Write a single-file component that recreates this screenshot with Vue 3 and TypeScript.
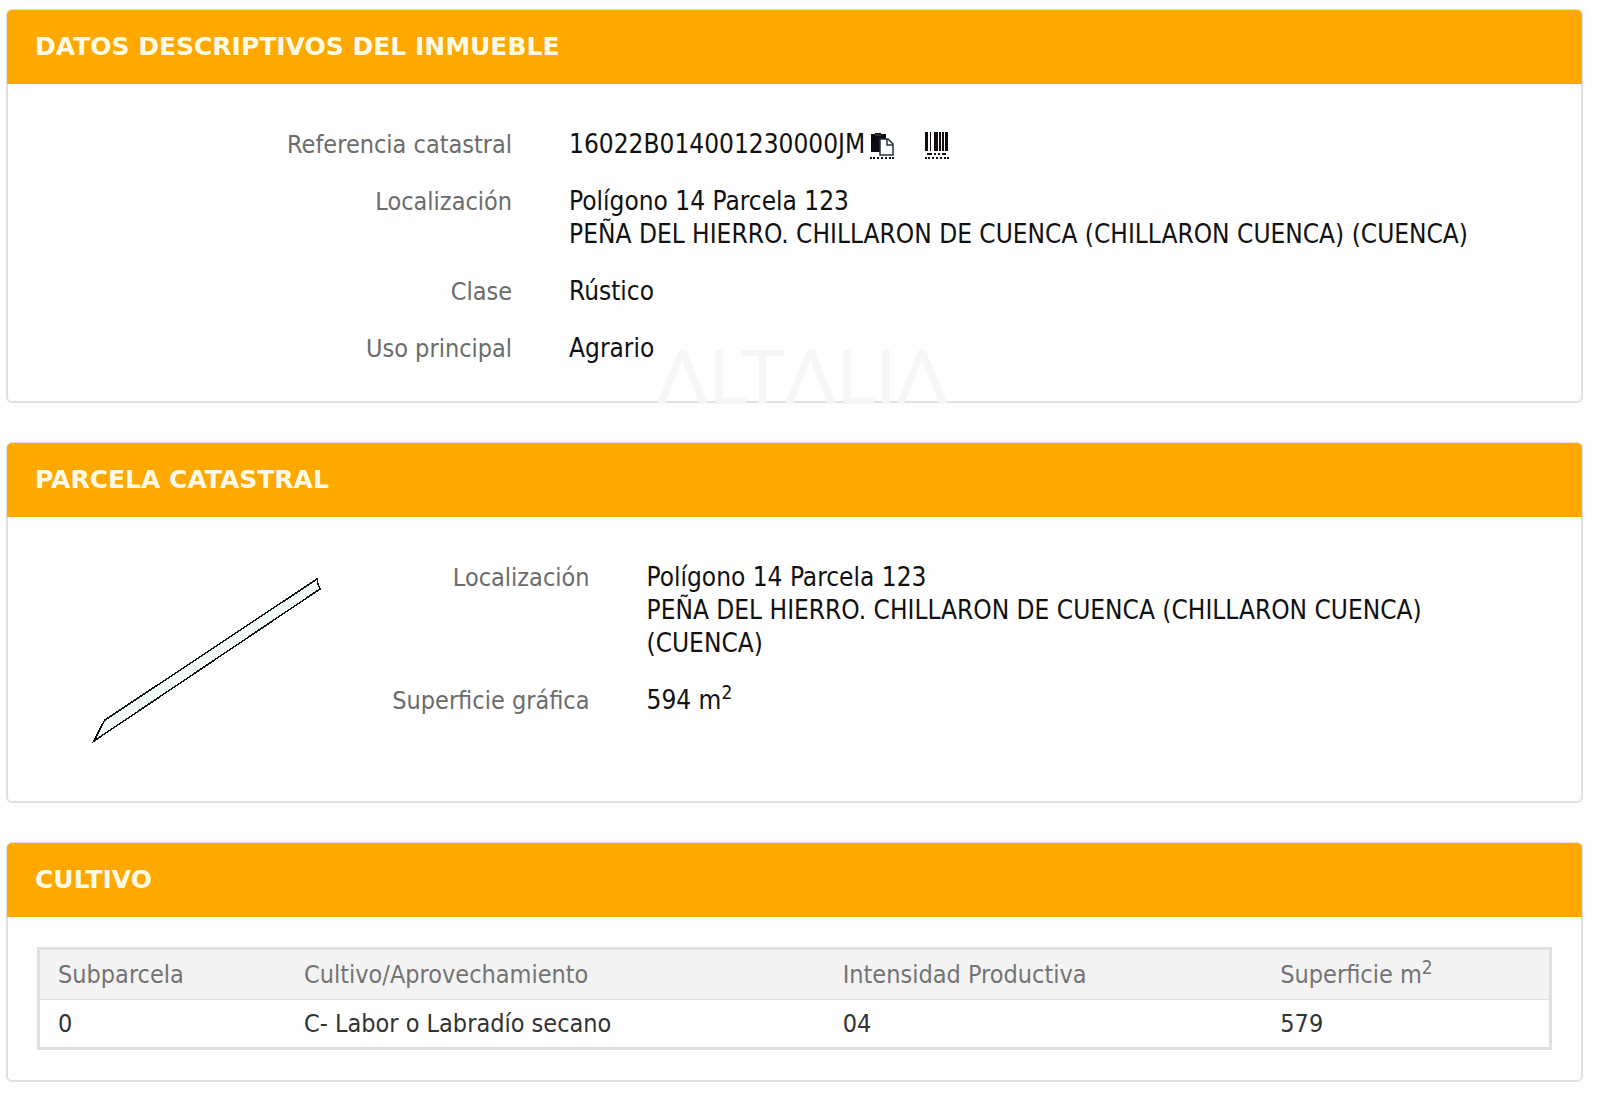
<script setup lang="ts">
interface Crop {
  subparcela: string
  cultivo: string
  intensidad: string
  superficie: number
}

const reference = '16022B014001230000JM'
const plot = 'Polígono 14 Parcela 123'
const address = 'PEÑA DEL HIERRO. CHILLARON DE CUENCA (CHILLARON CUENCA) (CUENCA)'

const crops: Crop[] = [
  { subparcela: '0', cultivo: 'C- Labor o Labradío secano', intensidad: '04', superficie: 579 },
]

function copyReference(): void {
  navigator.clipboard?.writeText(reference)
}
</script>

<template>
  <main class="page">
    <section class="card">
      <h2 class="card-title">DATOS DESCRIPTIVOS DEL INMUEBLE</h2>
      <dl class="fields property">
        <div class="field">
          <dt>Referencia catastral</dt>
          <dd class="reference">
            <span>{{ reference }}</span>
            <button class="icon" type="button" aria-label="Copiar referencia" @click="copyReference">
              <svg width="24" height="24" viewBox="0 0 24 24">
                <path d="M1 2h4V1h6v1h5v18H1z" fill="#0c0a12" />
                <path d="M5 3h6" stroke="#555" stroke-width="1" />
                <path d="M10 7h8l5 5v11H10z" fill="#fff" stroke="#26313d" stroke-width="1.5" />
                <path d="M17 7v6h6" fill="none" stroke="#26313d" stroke-width="1.5" />
              </svg>
            </button>
            <button class="icon barcode" type="button" aria-label="Código de barras">
              <svg width="24" height="24" viewBox="0 0 24 24" fill="#150c12">
                <path d="M0 0h3v19H0zM5 0h1v19H5zM9 0h4v19H9zM14 0h2v19h-2zM17 0h2v19h-2zM20 0h3v19h-3z" />
                <path d="M2 21h5v2H2zM9 21h2v2H9zM13 21h2v2h-2zM17 21h4v2h-4z" />
              </svg>
            </button>
          </dd>
        </div>
        <div class="field">
          <dt>Localización</dt>
          <dd>{{ plot }}<br />{{ address }}</dd>
        </div>
        <div class="field">
          <dt>Clase</dt>
          <dd>Rústico</dd>
        </div>
        <div class="field">
          <dt>Uso principal</dt>
          <dd>Agrario</dd>
        </div>
      </dl>
      <span class="watermark" aria-hidden="true">ΛLTΛLIΛ</span>
    </section>

    <section class="card">
      <h2 class="card-title">PARCELA CATASTRAL</h2>
      <div class="parcel">
        <svg class="outline" width="232" height="170" viewBox="0 0 232 170" role="img" aria-label="Plano de la parcela">
          <path d="M225 3L13 144L10 149L2 165L228 13L226 8Z" fill="#f1fbf5" stroke="#111" stroke-width="1.5" shape-rendering="crispEdges" />
        </svg>
        <dl class="fields">
          <div class="field">
            <dt>Localización</dt>
            <dd>{{ plot }}<br />{{ address }}</dd>
          </div>
          <div class="field">
            <dt>Superficie gráfica</dt>
            <dd>594 m<sup>2</sup></dd>
          </div>
        </dl>
      </div>
    </section>

    <section class="card">
      <h2 class="card-title">CULTIVO</h2>
      <div class="table-wrap">
        <table>
          <thead>
            <tr>
              <th class="c-sub" scope="col">Subparcela</th>
              <th class="c-crop" scope="col">Cultivo/Aprovechamiento</th>
              <th class="c-int" scope="col">Intensidad Productiva</th>
              <th scope="col">Superficie m<sup>2</sup></th>
            </tr>
          </thead>
          <tbody>
            <tr v-for="crop in crops" :key="crop.subparcela">
              <td>{{ crop.subparcela }}</td>
              <td>{{ crop.cultivo }}</td>
              <td>{{ crop.intensidad }}</td>
              <td>{{ crop.superficie }}</td>
            </tr>
          </tbody>
        </table>
      </div>
    </section>
  </main>
</template>

<style>
body {
  background: #fefefe;
}
</style>

<style scoped>
.page {
  display: flex;
  flex-direction: column;
  gap: 39px;
  padding: 9px 17px 19px 6px;
  font-family: Tahoma, "DejaVu Sans Condensed", "DejaVu Sans", sans-serif;
  font-size: 25px;
  line-height: 33px;
  color: #111;
}
.card {
  position: relative;
  border: 2px solid #e0e0e0;
  border-radius: 6px;
}
.card-title {
  margin: -1px -1px 0;
  padding: 21px 28px;
  border-radius: 5px 5px 0 0;
  background: #ffa800;
  color: #fffbe6;
  font-family: Verdana, "DejaVu Sans", sans-serif;
  font-size: 25px;
  font-weight: 700;
  line-height: 32px;
}
.fields {
  display: flex;
  flex-direction: column;
  gap: 24px;
  margin: 0;
}
.property {
  padding: 44px 28px 36px;
}
.field {
  display: grid;
  grid-template-columns: 15fr 31fr;
  column-gap: 57px;
}
dt {
  color: #6c6c6c;
  text-align: right;
}
dd {
  margin: 0;
  font-size: 26px;
}
sup {
  font-size: 19px;
  line-height: 0;
}
.reference {
  display: flex;
}
.icon {
  display: block;
  height: 28px;
  margin: 3px 0 0 5px;
  padding: 0;
  border: 0;
  border-bottom: 2px dotted #111;
  background: none;
  cursor: pointer;
}
.icon svg {
  display: block;
}
.barcode {
  margin-left: 31px;
}
.watermark {
  position: absolute;
  bottom: -20px;
  left: 50.5%;
  transform: translateX(-50%);
  color: #f6f6f6;
  font-family: Lato, sans-serif;
  font-size: 76px;
  line-height: 92px;
  pointer-events: none;
}
.parcel {
  display: flex;
  align-items: flex-start;
  padding: 44px 50px 55px 84px;
}
.outline {
  flex: none;
  margin-top: 15px;
}
.parcel .fields {
  flex: 1;
}
.parcel .field {
  grid-template-columns: 22% 1fr;
}
.table-wrap {
  padding: 30px 29px;
}
table {
  width: 100%;
  border: 3px solid #e0e0e0;
  border-collapse: separate;
  border-spacing: 0;
  table-layout: fixed;
}
th,
td {
  box-sizing: border-box;
  padding: 7px 18px;
  text-align: left;
  font-weight: 400;
}
th {
  border-bottom: 1px solid #dedede;
  background: #f3f3f3;
  color: #747474;
  padding: 8px 18px;
}
td {
  color: #333;
}
.c-sub {
  width: 16.3%;
}
.c-crop {
  width: 35.7%;
}
.c-int {
  width: 29%;
}
</style>
